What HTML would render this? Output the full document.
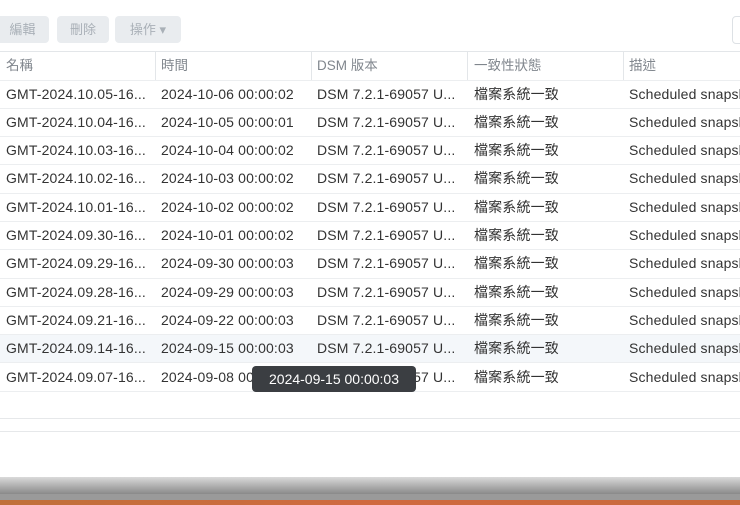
<!DOCTYPE html><html><head><meta charset="utf-8"><style>
body{margin:0;width:740px;height:505px;overflow:hidden;background:#fff;font-family:"Liberation Sans","Noto Sans CJK TC",sans-serif;position:relative}
.btn{position:absolute;top:16px;height:27px;background:#e9ecef;border-radius:4px;color:#a9b0b7;font-size:13px;line-height:27px;text-align:center}
.r{position:absolute;left:0;width:740px;height:28.3px;border-bottom:1px solid #eceef0;box-sizing:border-box}
.r span{position:absolute;top:0;line-height:27px;white-space:nowrap;font-size:14px;color:#333;letter-spacing:0.15px}
.hd{border-top:1px solid #e3e6e9}
.hd span{color:#80868d;font-size:13.5px;letter-spacing:0}
.hd i{position:absolute;top:0;bottom:0;width:1px;background:#e3e6e9}
.s1{left:6px}.s2{left:161px}.s3{left:317px}.s4{left:474px}.s5{left:629px}
</style></head><body>
<div class="btn" style="left:-4px;width:53px">編輯</div>
<div class="btn" style="left:57px;width:52px">刪除</div>
<div class="btn" style="left:115px;width:66px">操作 ▾</div>
<div style="position:absolute;left:732px;top:16px;width:20px;height:26px;border:1px solid #dde1e5;border-radius:4px"></div>
<div class="r hd" style="top:51px;height:29.5px"><i style="left:155px"></i><i style="left:311px"></i><i style="left:467px"></i><i style="left:623px"></i><span class="s1">名稱</span><span class="s2">時間</span><span class="s3">DSM 版本</span><span class="s4">一致性狀態</span><span class="s5">描述</span></div>
<div class="r" style="top:80.5px"><span class="s1">GMT-2024.10.05-16...</span><span class="s2">2024-10-06 00:00:02</span><span class="s3">DSM 7.2.1-69057 U...</span><span class="s4">檔案系統一致</span><span class="s5">Scheduled snapshot</span></div>
<div class="r" style="top:108.8px"><span class="s1">GMT-2024.10.04-16...</span><span class="s2">2024-10-05 00:00:01</span><span class="s3">DSM 7.2.1-69057 U...</span><span class="s4">檔案系統一致</span><span class="s5">Scheduled snapshot</span></div>
<div class="r" style="top:137.1px"><span class="s1">GMT-2024.10.03-16...</span><span class="s2">2024-10-04 00:00:02</span><span class="s3">DSM 7.2.1-69057 U...</span><span class="s4">檔案系統一致</span><span class="s5">Scheduled snapshot</span></div>
<div class="r" style="top:165.4px"><span class="s1">GMT-2024.10.02-16...</span><span class="s2">2024-10-03 00:00:02</span><span class="s3">DSM 7.2.1-69057 U...</span><span class="s4">檔案系統一致</span><span class="s5">Scheduled snapshot</span></div>
<div class="r" style="top:193.7px"><span class="s1">GMT-2024.10.01-16...</span><span class="s2">2024-10-02 00:00:02</span><span class="s3">DSM 7.2.1-69057 U...</span><span class="s4">檔案系統一致</span><span class="s5">Scheduled snapshot</span></div>
<div class="r" style="top:222px"><span class="s1">GMT-2024.09.30-16...</span><span class="s2">2024-10-01 00:00:02</span><span class="s3">DSM 7.2.1-69057 U...</span><span class="s4">檔案系統一致</span><span class="s5">Scheduled snapshot</span></div>
<div class="r" style="top:250.3px"><span class="s1">GMT-2024.09.29-16...</span><span class="s2">2024-09-30 00:00:03</span><span class="s3">DSM 7.2.1-69057 U...</span><span class="s4">檔案系統一致</span><span class="s5">Scheduled snapshot</span></div>
<div class="r" style="top:278.6px"><span class="s1">GMT-2024.09.28-16...</span><span class="s2">2024-09-29 00:00:03</span><span class="s3">DSM 7.2.1-69057 U...</span><span class="s4">檔案系統一致</span><span class="s5">Scheduled snapshot</span></div>
<div class="r" style="top:306.9px"><span class="s1">GMT-2024.09.21-16...</span><span class="s2">2024-09-22 00:00:03</span><span class="s3">DSM 7.2.1-69057 U...</span><span class="s4">檔案系統一致</span><span class="s5">Scheduled snapshot</span></div>
<div class="r" style="top:335.2px;background:#f4f7fa"><span class="s1">GMT-2024.09.14-16...</span><span class="s2">2024-09-15 00:00:03</span><span class="s3">DSM 7.2.1-69057 U...</span><span class="s4">檔案系統一致</span><span class="s5">Scheduled snapshot</span></div>
<div class="r" style="top:363.5px"><span class="s1">GMT-2024.09.07-16...</span><span class="s2">2024-09-08 00:00:03</span><span class="s3">DSM 7.2.1-69057 U...</span><span class="s4">檔案系統一致</span><span class="s5">Scheduled snapshot</span></div>
<div style="position:absolute;left:252px;top:366px;width:164px;height:26px;background:#3b3e42;border-radius:4px;color:#fff;font-size:14px;line-height:26px;text-align:center">2024-09-15 00:00:03</div>
<div style="position:absolute;left:0;top:418px;width:740px;height:1px;background:#e6e8ea"></div>
<div style="position:absolute;left:0;top:431px;width:740px;height:1px;background:#e6e8ea"></div>
<div style="position:absolute;left:0;top:477px;width:740px;height:17px;background:linear-gradient(#dadada,#8a8a8a)"></div>
<div style="position:absolute;left:0;top:494px;width:740px;height:6px;background:#9a9a9a"></div>
<div style="position:absolute;left:0;top:500px;width:740px;height:5px;background:linear-gradient(90deg,#c0703a,#d06a40,#c86a3c)"></div>
</body></html>
